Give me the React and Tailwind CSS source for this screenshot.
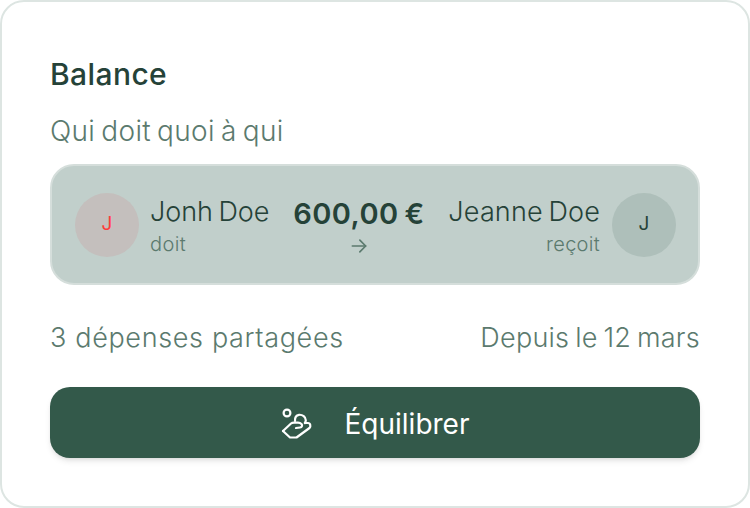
const Avatar = ({ color, bg }) => (
    <div className={`w-16 h-16 shrink-0 rounded-full flex items-center justify-center text-[19px] font-normal ${bg} ${color}`}>J</div>
)

const App = () => {
    return (
        <main className="w-[750px] h-[508px] bg-white font-['Inter',sans-serif] text-[#254238]">
            <div className="w-full h-full bg-white border-2 border-[#dde5e2] rounded-[24px] px-[48px] pt-[52px]">
                <h2 className="text-[30px] leading-[40px] font-medium tracking-[0.4px]">Balance</h2>
                <p className="mt-[20px] text-[28px] leading-[34px] font-[350] text-[#5b7a6e] tracking-[0.3px] [word-spacing:-2px]">Qui doit quoi à qui</p>
                <div className="mt-[16px] h-[121px] bg-[#c1cfcb] border-2 border-[#d5dedb] rounded-[24px] pl-[23px] pr-[22px] flex items-center justify-between">
                    <div className="flex items-center gap-3">
                        <Avatar bg="bg-[#c4bfbd]" color="text-[#ff3b3b]" />
                        <div className="-ml-[1px]">
                            <div className="mt-[2px] text-[27px] leading-[36px] font-[350] tracking-[-0.05px] [word-spacing:-2px]">Jonh Doe</div>
                            <div className="text-[20px] leading-[28px] font-[350] text-[#5b7a6e] tracking-[0.4px]">doit</div>
                        </div>
                    </div>
                    <div className="flex flex-col items-center">
                        <div className="mt-[2px] text-[29px] leading-[36px] font-semibold tracking-[0.45px] [word-spacing:-2px]">600,00 €</div>
                        <svg className="mt-[4px]" width="20" height="20" viewBox="0 0 24 24" fill="none" stroke="#5b7a6e" strokeWidth="2" strokeLinecap="round" strokeLinejoin="round">
                            <path d="M4 12h16" />
                            <path d="m13 5 7 7-7 7" />
                        </svg>
                    </div>
                    <div className="flex items-center gap-3">
                        <div className="text-right">
                            <div className="mt-[2px] text-[27px] leading-[36px] font-[350] tracking-[0.15px] [word-spacing:-2px]">Jeanne Doe</div>
                            <div className="text-[20px] leading-[28px] font-[350] text-[#5b7a6e] tracking-[0.3px]">reçoit</div>
                        </div>
                        <Avatar bg="bg-[#aebfba]" color="text-[#254238]" />
                    </div>
                </div>
                <div className="mt-[35px] flex justify-between text-[27px] leading-[36px] font-[350] text-[#5b7a6e]">
                    <span className="tracking-[0.65px]">3 dépenses partagées</span>
                    <span className="tracking-[0.25px] [word-spacing:-2px]">Depuis le 12 mars</span>
                </div>
                <button className="mt-[31px] w-full h-[71px] bg-[#33594a] rounded-[20px] shadow-md text-white text-[28px] font-normal flex items-center justify-center gap-[32px]">
                    <svg width="32" height="32" viewBox="0 0 32 32" fill="none" stroke="white" strokeWidth="2.2" strokeLinecap="round" strokeLinejoin="round">
                        <circle cx="6" cy="6" r="3.400" />
                        <path d="M2 24l8-7.500c1-.8 2-.8 3-.8h4c1.200 0 2.500 .3 3.500 1.300c1.200 1.300 .5 3.300 -1.500 3.500l-4 .5" />
                        <path d="M2 24l7 6.500h6.500l13-9.500c1.500-1.500 1-5-1.500-5h-3" />
                        <path d="M14 14c-.2-3 1-5.800 4-6.200c3.500-.4 6.800 2.400 6.800 5.400c0 1-.4 2-1 2.800" />
                    </svg>
                    <span className="mt-[2px]">Équilibrer</span>
                </button>
            </div>
        </main>
    )
}

export default App
